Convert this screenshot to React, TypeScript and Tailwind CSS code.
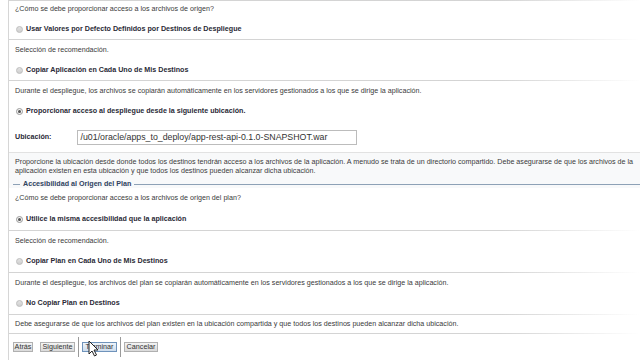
import React from 'react'

function Sep() {
  return <div className="h-px bg-linear-to-r from-[#d4d4d4] from-78% to-white" />
}

function TextRow({ children, h = 'h-[20px]' }: { children: React.ReactNode; h?: string }) {
  return <div className={`flex ${h} items-center pl-[6px] whitespace-nowrap`}>{children}</div>
}

function Radio({ checked }: { checked?: boolean }) {
  return (
    <span
      className={`flex h-[7px] w-[7px] shrink-0 items-center justify-center rounded-full border ${
        checked ? 'border-[#9a9a9a] bg-[#f4f4f4]' : 'border-[#bdbdbd] bg-linear-to-b from-[#e2e2e2] to-[#cfcfcf]'
      }`}
    >
      {checked && <span className="h-[3px] w-[3px] rounded-full bg-[#555]" />}
    </span>
  )
}

function RadioRow({ label, checked, h = 'h-[20px]' }: { label: string; checked?: boolean; h?: string }) {
  return (
    <div className={`flex ${h} items-center gap-[3px] pl-[7px] whitespace-nowrap`}>
      <Radio checked={checked} />
      <span className="font-bold text-[#2a2a36]">{label}</span>
    </div>
  )
}

function Btn({ label, w, active }: { label: string; w: string; active?: boolean }) {
  return (
    <button
      className={`flex h-[10px] ${w} items-center justify-center border text-[7.2px] leading-none text-[#333] ${
        active
          ? 'border-[#6f93bb] bg-linear-to-b from-[#eef4fa] to-[#cddcec]'
          : 'border-[#b0b0b0] bg-linear-to-b from-[#f4f4f4] to-[#dadada]'
      }`}
    >
      {label}
    </button>
  )
}

function Cursor() {
  return (
    <svg className="absolute left-[88px] top-[340px]" width="11" height="17" viewBox="0 0 11 17">
      <path d="M1 1 L1 14 L4 11 L6.5 16 L8.5 15 L6 10 L10 10 Z" fill="#fff" stroke="#222" strokeWidth="1" strokeLinejoin="round" />
    </svg>
  )
}

export default function App() {
  return (
    <div className="h-[360px] w-[640px] overflow-hidden bg-white font-['Liberation_Sans',Arial,sans-serif] text-[7.15px] leading-[8.5px] text-[#3a3a3a]">
      <div className="relative ml-[8px] h-full border-l border-[#d6d6d6]">
        <Sep />
        <TextRow h="h-[18px] pb-[2px]">¿Cómo se debe proporcionar acceso a los archivos de origen?</TextRow>
        <RadioRow label="Usar Valores por Defecto Definidos por Destinos de Despliegue" />
        <Sep />
        <TextRow>Selección de recomendación.</TextRow>
        <RadioRow label="Copiar Aplicación en Cada Uno de Mis Destinos" />
        <Sep />
        <TextRow>
          Durante el despliegue, los archivos se copiarán automáticamente en los servidores gestionados a los que se dirige la aplicación.
        </TextRow>
        <RadioRow label="Proporcionar acceso al despliegue desde la siguiente ubicación." checked />

        <div className="flex h-[31px] items-start gap-[25px] pl-[6px] pt-[9px]">
          <span className="mt-[3px] font-bold text-[#2a2a36]">Ubicación:</span>
          <div className="flex h-[15px] w-[280px] items-center border border-[#bcbcbc] pl-[3px] text-[8.8px] text-[#333]">
            /u01/oracle/apps_to_deploy/app-rest-api-0.1.0-SNAPSHOT.war
          </div>
        </div>

        <div className="border-t border-[#e2e2e2] bg-[#f8f9fa] pb-[5px] pl-[6px] pt-[5px] whitespace-nowrap">
          Proporcione la ubicación desde donde todos los destinos tendrán acceso a los archivos de la aplicación. A menudo se trata de un directorio compartido. Debe asegurarse de que los archivos de la
          <br />
          aplicación existen en esta ubicación y que todos los destinos pueden alcanzar dicha ubicación.
        </div>

        <div className="flex h-[8px] items-center bg-[#f8f9fa]">
          <span className="ml-[4px] h-px w-[7px] bg-[#8da1b6]" />
          <span className="px-[3px] font-bold text-[#2f4260]">Accesibilidad al Origen del Plan</span>
          <span className="h-px flex-1 bg-[#8da1b6]" />
        </div>

        <TextRow>¿Cómo se debe proporcionar acceso a los archivos de origen del plan?</TextRow>
        <RadioRow label="Utilice la misma accesibilidad que la aplicación" checked h="h-[22px]" />
        <Sep />
        <TextRow>Selección de recomendación.</TextRow>
        <RadioRow label="Copiar Plan en Cada Uno de Mis Destinos" h="h-[21px]" />
        <Sep />
        <TextRow>
          Durante el despliegue, los archivos del plan se copiarán automáticamente en los servidores gestionados a los que se dirige la aplicación.
        </TextRow>
        <RadioRow label="No Copiar Plan en Destinos" h="h-[21px]" />
        <Sep />
        <TextRow h="h-[18px]">
          Debe asegurarse de que los archivos del plan existen en la ubicación compartida y que todos los destinos pueden alcanzar dicha ubicación.
        </TextRow>
        <Sep />

        <div className="flex h-[26px] items-center pl-[4px]">
          <Btn label="Atrás" w="w-[20px]" />
          <span className="ml-[7px]" />
          <Btn label="Siguiente" w="w-[35px]" />
          <span className="mx-[3px] h-[20px] w-px bg-[#9a9a9a]" />
          <Btn label="Terminar" w="w-[35px]" active />
          <span className="mx-[3px] h-[20px] w-px bg-[#9a9a9a]" />
          <Btn label="Cancelar" w="w-[34px]" />
        </div>
      </div>
      <Cursor />
    </div>
  )
}
